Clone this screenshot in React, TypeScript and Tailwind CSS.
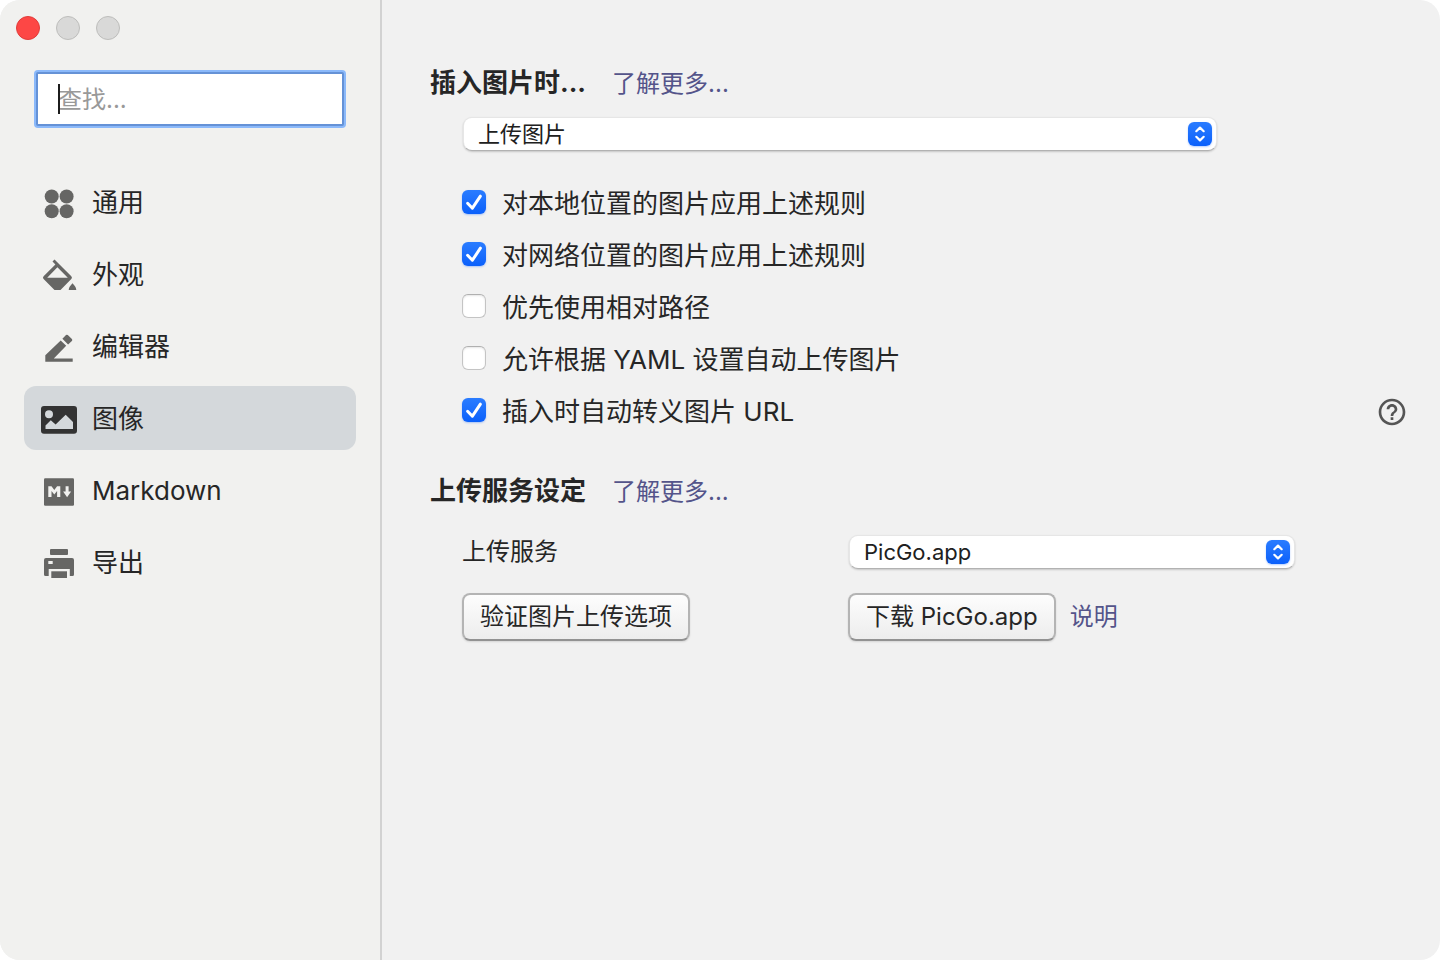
import { useState, type ReactNode } from "react";

function GeneralIcon() {
  return (
    <>
      <circle cx="11.7" cy="14.5" r="7" />
      <circle cx="26.6" cy="14.5" r="7" />
      <circle cx="11.7" cy="29.3" r="7" />
      <circle cx="26.6" cy="29.3" r="7" />
    </>
  );
}

function AppearanceIcon() {
  return (
    <>
      <path
        fillRule="evenodd"
        d="M14.5 5.5 31.3 22.3a2 2 0 0 1 0 2.8L20.5 36h-6L3.6 25.1a2 2 0 0 1 0-2.8L15.4 10.4l-2.9-2.9zM17.4 13.3 7.2 23.7h20.6z"
      />
      <path d="M32.5 29.3c1.6 1.8 3.8 4.2 3.8 6.7h-7.6c0-2.5 2.2-4.9 3.8-6.7z" />
    </>
  );
}

function EditorIcon() {
  return (
    <>
      <path d="M5.3 35.7v-6.4L20.7 14.5l5.5 5.3L13.8 32.6h18.9v3.1z" />
      <path d="M22.4 12.8 26 9.1q.9-.9 1.8 0l4.1 4q.9.9 0 1.8l-3.8 3.6z" />
    </>
  );
}

function ImageIcon() {
  return (
    <path
      fillRule="evenodd"
      d="M4 8h30a3 3 0 0 1 3 3v21.7a3 3 0 0 1-3 3H4a3 3 0 0 1-3-3V11a3 3 0 0 1 3-3zM9 12.3a4 4 0 1 0 0 8 4 4 0 0 0 0-8zM5.500 31H33v-7l-7.300-7.300L15.600 26.500l-4.800-4.300L5.500 27.500z"
    />
  );
}

function MarkdownIcon() {
  return (
    <>
      <rect x="4" y="8.3" width="30" height="27.4" rx="1.2" />
      <path
        fill="#f1f1ef"
        d="M8.3 27V16.3h3.2l2.8 3.6 2.8-3.6h3.2V27h-3.2v-6l-2.8 3.5-2.8-3.5v6zM25.6 16.3h3v5.300h2.500L27.100 27.200l-4-5.600h2.500z"
      />
    </>
  );
}

function ExportIcon() {
  return (
    <>
      <rect x="10" y="7" width="18" height="6" rx="1" />
      <path
        fillRule="evenodd"
        d="M6 16h26a2 2 0 0 1 2 2v14.500q0 1.500-1.500 1.500h-2.700v-7H8.700v7H5.500Q4 34 4 32.500V18a2 2 0 0 1 2-2zM8.300 19v3h4.400v-3z"
      />
      <rect x="11.3" y="29.3" width="15.7" height="6.7" />
    </>
  );
}

const navItems: { label: string; icon: ReactNode }[] = [
  { label: "通用", icon: <GeneralIcon /> },
  { label: "外观", icon: <AppearanceIcon /> },
  { label: "编辑器", icon: <EditorIcon /> },
  { label: "图像", icon: <ImageIcon /> },
  { label: "Markdown", icon: <MarkdownIcon /> },
  { label: "导出", icon: <ExportIcon /> },
];

const initialRules = [
  { id: "local", label: "对本地位置的图片应用上述规则", checked: true },
  { id: "remote", label: "对网络位置的图片应用上述规则", checked: true },
  { id: "relative", label: "优先使用相对路径", checked: false },
  { id: "yaml", label: "允许根据 YAML 设置自动上传图片", checked: false },
  { id: "escape", label: "插入时自动转义图片 URL", checked: true },
];

function PopupSelect({ id, label, options }: { id: string; label: string; options: string[] }) {
  return (
    <div className="relative mx-px">
      <select
        id={id}
        aria-label={label}
        className="block h-[34px] w-full appearance-none rounded-[9px] border border-black/10 border-b-black/30 bg-white pr-10 pl-[14px] text-[22px] leading-8 text-[#202020] shadow-[0_1px_2px_rgba(0,0,0,0.18)] outline-none"
      >
        {options.map((o) => (
          <option key={o}>{o}</option>
        ))}
      </select>
      <span className="pointer-events-none absolute inset-y-0 right-[5px] flex items-center">
        <span className="flex size-6 items-center justify-center rounded-[6px] bg-linear-to-b from-[#2a7cff] to-[#0a60fb] shadow-[0_1px_2px_rgba(0,90,255,0.3)]">
          <svg
            viewBox="0 0 24 24"
            className="size-6"
            fill="none"
            stroke="white"
            strokeWidth="2.2"
            strokeLinecap="round"
            strokeLinejoin="round"
          >
            <path d="M8.3 9.2 12 5.6l3.7 3.6M8.3 14.8l3.7 3.6 3.7-3.6" />
          </svg>
        </span>
      </span>
    </div>
  );
}

function SectionHeading({ title }: { title: string }) {
  return (
    <div className="flex items-baseline gap-[26px] leading-8">
      <h2 className="text-[26px] font-bold">{title}</h2>
      <a href="#more" className="text-2xl leading-8 text-[#54548a]">
        了解更多...
      </a>
    </div>
  );
}

function PushButton({ children }: { children: ReactNode }) {
  return (
    <button
      type="button"
      className="h-12 rounded-[8px] border-2 border-[#b4b4b4] border-b-[#929292] bg-linear-to-b from-[#fdfdfd] to-[#ededed] px-4 text-2xl leading-8 whitespace-nowrap shadow-[0_1px_2px_rgba(0,0,0,0.12)]"
    >
      {children}
    </button>
  );
}

export default function App() {
  const [active, setActive] = useState("图像");
  const [rules, setRules] = useState(initialRules);

  const toggle = (id: string) =>
    setRules(rules.map((r) => (r.id === id ? { ...r, checked: !r.checked } : r)));

  return (
    <div className="min-h-screen bg-white font-[Inter,'Noto_Sans_CJK_SC',sans-serif] text-[#262626]">
      <div className="flex min-h-screen overflow-hidden rounded-[20px] bg-[#f1f1f1]">
        <aside className="w-[382px] shrink-0 border-r-2 border-[#d2d2d2] bg-[#f1f1ef]">
          <div className="flex gap-4 p-4">
            <button aria-label="关闭" className="size-6 rounded-full border border-[#e03c3a] bg-[#fd4745]" />
            <button aria-label="最小化" className="size-6 rounded-full border border-[#bdbdbb] bg-[#d9d9d8]" />
            <button aria-label="缩放" className="size-6 rounded-full border border-[#bdbdbb] bg-[#d9d9d8]" />
          </div>

          <div className="relative mx-9 mt-4">
            <input
              type="search"
              aria-label="查找"
              placeholder="查找..."
              className="block h-[54px] w-full rounded-[2px] border-2 border-[#6592d6] bg-white px-5 text-2xl ring-2 ring-[#8bb9fa] outline-none placeholder:text-[#999]"
            />
            <span className="pointer-events-none absolute top-3 left-[22px] h-[30px] w-[2px] bg-[#1c1c1c]" />
          </div>

          <nav className="mt-11 flex flex-col gap-2 px-6">
            {navItems.map(({ label, icon }) => (
              <button
                key={label}
                type="button"
                onClick={() => setActive(label)}
                className={
                  active === label
                    ? "flex h-16 items-center gap-3 rounded-[12px] bg-[#d4d8db] px-4"
                    : "flex h-16 items-center gap-3 rounded-[12px] px-4"
                }
              >
                <svg
                  viewBox="0 0 40 40"
                  className={active === label ? "size-10 fill-[#333333]" : "size-10 fill-[#666664]"}
                >
                  {icon}
                </svg>
                <span className="pt-0.5 text-[26px] leading-8">{label}</span>
              </button>
            ))}
          </nav>
        </aside>

        <main className="min-w-0 flex-1 pt-[67px] pr-8 pl-12">
          <section>
            <SectionHeading title="插入图片时..." />
            <div className="pl-8">
              <div className="mt-[17px] max-w-[756px]">
                <PopupSelect
                  id="insert-action"
                  label="插入图片时"
                  options={["上传图片", "无特殊操作", "复制图片到文件夹"]}
                />
              </div>
              <ul className="mt-[25px]">
                {rules.map((r) => (
                  <li key={r.id} className="flex h-[52px] items-center justify-between">
                    <label htmlFor={r.id} className="flex items-center gap-4">
                      <span className="relative size-6">
                        <input
                          id={r.id}
                          type="checkbox"
                          checked={r.checked}
                          onChange={() => toggle(r.id)}
                          className="peer block size-6 appearance-none rounded-[6px] border border-[#c4c4c4] border-t-[#b0b0b0] bg-white shadow-[inset_0_1px_2px_rgba(0,0,0,0.1)] checked:border-0 checked:bg-linear-to-b checked:from-[#2a7cff] checked:to-[#0a60fb] checked:shadow-[0_1px_2px_rgba(0,90,255,0.3)]"
                        />
                        <svg
                          viewBox="0 0 24 24"
                          className="pointer-events-none absolute inset-0 hidden size-6 peer-checked:block"
                          fill="none"
                          stroke="white"
                          strokeWidth="3"
                          strokeLinecap="round"
                          strokeLinejoin="round"
                        >
                          <path d="M5.6 13.3 10.4 18.2 18.4 6.2" />
                        </svg>
                      </span>
                      <span className="pt-1 text-[26px] leading-8">{r.label}</span>
                    </label>
                    {r.id === "escape" && (
                      <button type="button" aria-label="帮助" className="pt-1">
                        <svg viewBox="0 0 24 24" className="size-8 fill-[#555555]">
                          <path d="M11 18h2v-2h-2v2zm1-16C6.480 2 2 6.480 2 12s4.480 10 10 10 10-4.480 10-10S17.520 2 12 2zm0 18c-4.410 0-8-3.590-8-8s3.590-8 8-8 8 3.590 8 8-3.590 8-8 8zm0-14c-2.210 0-4 1.790-4 4h2c0-1.100.9-2 2-2s2 .9 2 2c0 2-3 1.750-3 5h2c0-2.250 3-2.500 3-5 0-2.210-1.790-4-4-4z" />
                        </svg>
                      </button>
                    )}
                  </li>
                ))}
              </ul>
            </div>
          </section>

          <section className="mt-[39px]">
            <SectionHeading title="上传服务设定" />
            <div className="mt-[27px] grid grid-cols-[386px_1fr] items-center gap-y-6 pl-8">
              <label htmlFor="uploader" className="text-2xl leading-8">
                上传服务
              </label>
              <div className="max-w-[448px]">
                <PopupSelect id="uploader" label="上传服务" options={["PicGo.app", "iPic", "uPic"]} />
              </div>
              <div>
                <PushButton>验证图片上传选项</PushButton>
              </div>
              <div className="flex items-center gap-[14px]">
                <PushButton>下载 PicGo.app</PushButton>
                <a href="#help" className="text-2xl leading-8 text-[#54548a]">
                  说明
                </a>
              </div>
            </div>
          </section>
        </main>
      </div>
    </div>
  );
}
